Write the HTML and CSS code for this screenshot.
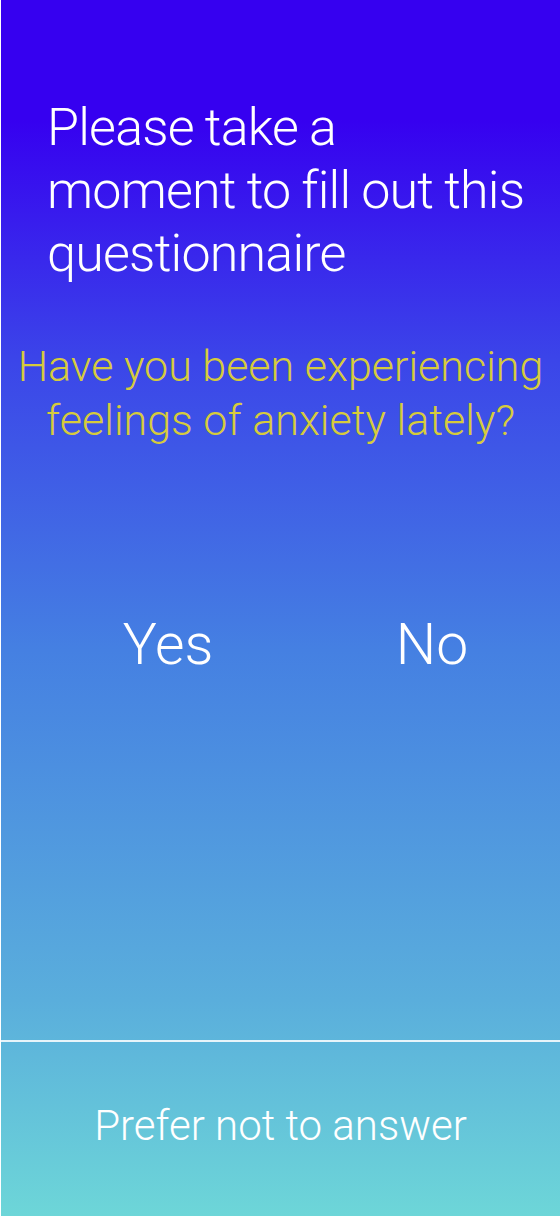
FILE: index.html
```html
<!DOCTYPE html>
<html lang="en">

<head>
    <meta charset="UTF-8">
    <meta name="viewport" content="width=device-width, initial-scale=1.0">
    <title>Questionnaire</title>
    <link rel="stylesheet" href="styles.css">
</head>

<body>
    <div class="screen">
        <main class="content">
            <h1 class="title">Please take a<br>moment to fill out this<br>questionnaire</h1>
            <p class="question">Have you been experiencing feelings of anxiety lately?</p>
            <div class="answers">
                <button class="answer">Yes</button>
                <button class="answer">No</button>
            </div>
        </main>
        <footer class="skip">
            <button class="skip-button">Prefer not to answer</button>
        </footer>
    </div>
</body>

</html>
```

FILE: styles.css
```css
body {
    margin: 0;
    background: #fff;
    font-family: Roboto, "Liberation Sans", sans-serif;
    font-weight: 300;
}

.screen {
    margin-left: 1px;
    height: 1216px;
    display: flex;
    flex-direction: column;
    background: linear-gradient(#3600f0 0, #3600f0 120px, #3b45e9 360px, #4580e2 650px, #5aaedc 1000px, #6dd6d8 1216px);
    color: #fff;
}

.content {
    flex: 1;
}

.title {
    margin: 96px 0 0 46px;
    font-size: 52px;
    font-weight: 300;
    line-height: 63px;
    letter-spacing: -0.8px;
    word-spacing: -1px;
    white-space: nowrap;
}

.question {
    margin: 54px 0 0;
    text-align: center;
    color: #d6cb3c;
    font-size: 43px;
    line-height: 54px;
}

.answers {
    display: grid;
    grid-template-columns: 200px 200px;
    gap: 64px;
    margin-top: 164px;
    padding-left: 67px;
}

.answer,
.skip-button {
    background: none;
    border: none;
    padding: 0;
    color: #fff;
    font-family: inherit;
    font-weight: 300;
    cursor: pointer;
}

.answer {
    font-size: 57px;
}

.skip {
    height: 176px;
    padding-bottom: 8px;
    box-sizing: border-box;
    border-top: 2px solid rgba(255, 255, 255, 0.85);
    display: flex;
    align-items: center;
    justify-content: center;
}

.skip-button {
    font-size: 42px;
}
```
